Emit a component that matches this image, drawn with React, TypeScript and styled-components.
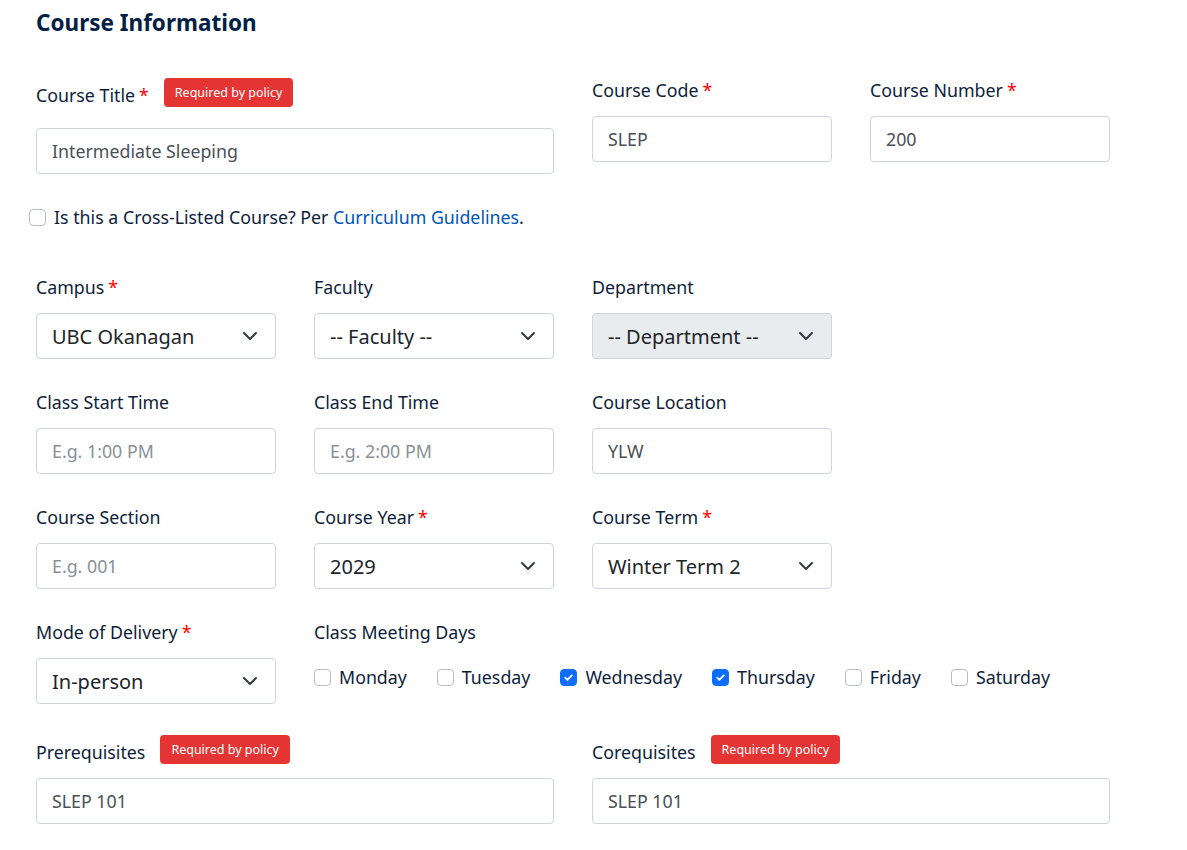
import React from 'react';
import styled, { createGlobalStyle } from 'styled-components';

const GlobalStyle = createGlobalStyle`
  body {
    margin: 0;
    background: #ffffff;
    font-family: "Noto Sans", "Open Sans", sans-serif;
  }
`;

const Page = styled.div`
  padding: 7px 36px 24px;
  width: 1074px;
`;

const Heading = styled.h2`
  margin: 0 0 39px;
  font-size: 22.5px;
  line-height: 32px;
  font-weight: 700;
  color: #002145;
`;

const Form = styled.div`
  display: flex;
  flex-direction: column;
  gap: 31px;
`;

const Row = styled.div`
  display: grid;
  grid-template-columns: repeat(4, 240px);
  column-gap: 38px;
  align-items: start;
`;

const Field = styled.div<{ $span?: number }>`
  grid-column: span ${({ $span }) => $span || 1};
  display: flex;
  flex-direction: column;
`;

const LabelRow = styled.div<{ $extra?: boolean }>`
  display: flex;
  align-items: flex-end;
  gap: 15px;
  margin-bottom: ${({ $extra }) => ($extra ? '21px' : '14px')};
`;

const Label = styled.label`
  font-size: 17.8px;
  line-height: 24px;
  color: #0e1e3a;
`;

const Star = styled.span`
  color: #ff0000;
  margin-left: 4px;
`;

const Badge = styled.span`
  display: inline-flex;
  align-items: center;
  height: 29px;
  padding: 0 11px;
  border-radius: 4px;
  background: #e43434;
  color: #ffffff;
  font-size: 12.5px;
`;

const Input = styled.input`
  box-sizing: border-box;
  width: 100%;
  height: 46px;
  padding: 0 15px;
  border: 1px solid #ced4da;
  border-radius: 4px;
  font-family: inherit;
  font-size: 17.8px;
  color: #495057;
  background: #ffffff;

  &::placeholder {
    color: #8a9097;
  }
`;

const SelectWrap = styled.div`
  position: relative;
  width: 100%;
`;

const Select = styled.select<{ $disabled?: boolean }>`
  box-sizing: border-box;
  width: 100%;
  height: 46px;
  padding: 0 40px 0 15px;
  border: 1px solid #ced4da;
  border-radius: 4px;
  font-family: inherit;
  font-size: 20px;
  color: #212529;
  background: ${({ $disabled }) => ($disabled ? '#e9ecef' : '#ffffff')};
  appearance: none;
  -webkit-appearance: none;
  opacity: 1;
`;

const Chevron = styled.svg`
  position: absolute;
  right: 18px;
  top: 50%;
  margin-top: -6px;
  width: 16px;
  height: 12px;
  pointer-events: none;
`;

const CheckLine = styled.div`
  display: flex;
  align-items: center;
  gap: 8px;
  margin: 0 0 15px -7px;
  font-size: 17.8px;
  line-height: 24px;
  color: #0e1e3a;
`;

const Link = styled.a`
  color: #0055b7;
  text-decoration: none;
`;

const Box = styled.span<{ $checked?: boolean }>`
  box-sizing: border-box;
  display: inline-flex;
  align-items: center;
  justify-content: center;
  width: 17px;
  height: 17px;
  border-radius: 4px;
  border: 1px solid ${({ $checked }) => ($checked ? '#0d6efd' : '#b8bcc1')};
  background: ${({ $checked }) => ($checked ? '#0d6efd' : '#ffffff')};
  flex-shrink: 0;
`;

const Days = styled.div`
  display: flex;
  align-items: center;
  gap: 30px;
  height: 46px;
  margin-top: -4px;
`;

const Day = styled.label`
  display: flex;
  align-items: center;
  gap: 8px;
  font-size: 17.8px;
  color: #0e1e3a;
`;

const ChevronIcon = () => (
  <Chevron viewBox="0 0 16 12">
    <path d="M2 3l6 6 6-6" fill="none" stroke="#343a40" strokeWidth="2" strokeLinecap="round" strokeLinejoin="round" />
  </Chevron>
);

const CheckBox: React.FC<{ checked?: boolean }> = ({ checked }) => (
  <Box $checked={checked}>
    {checked && (
      <svg width="11" height="11" viewBox="0 0 12 12">
        <path d="M2.5 6.2l2.3 2.3 4.8-4.8" fill="none" stroke="#ffffff" strokeWidth="2" strokeLinecap="round" strokeLinejoin="round" />
      </svg>
    )}
  </Box>
);

interface SelectFieldProps {
  label: string;
  value: string;
  required?: boolean;
  disabled?: boolean;
}

const SelectField: React.FC<SelectFieldProps> = ({ label, value, required, disabled }) => (
  <Field>
    <LabelRow>
      <Label>
        {label}
        {required && <Star>*</Star>}
      </Label>
    </LabelRow>
    <SelectWrap>
      <Select $disabled={disabled} defaultValue={value}>
        <option value={value}>{value}</option>
      </Select>
      <ChevronIcon />
    </SelectWrap>
  </Field>
);

interface InputFieldProps {
  label: string;
  value?: string;
  placeholder?: string;
  required?: boolean;
  badge?: boolean;
  span?: number;
  extra?: boolean;
}

const InputField: React.FC<InputFieldProps> = ({ label, value, placeholder, required, badge, span, extra }) => (
  <Field $span={span}>
    <LabelRow $extra={extra}>
      <Label>
        {label}
        {required && <Star>*</Star>}
      </Label>
      {badge && <Badge>Required by policy</Badge>}
    </LabelRow>
    <Input defaultValue={value} placeholder={placeholder} />
  </Field>
);

const days = [
  { name: 'Monday', checked: false },
  { name: 'Tuesday', checked: false },
  { name: 'Wednesday', checked: true },
  { name: 'Thursday', checked: true },
  { name: 'Friday', checked: false },
  { name: 'Saturday', checked: false },
];

const App: React.FC = () => {
  return (
    <Page>
      <GlobalStyle />
      <Heading>Course Information</Heading>
      <Form>
        <Row>
          <InputField label="Course Title" value="Intermediate Sleeping" required badge span={2} extra />
          <InputField label="Course Code" value="SLEP" required />
          <InputField label="Course Number" value="200" required />
        </Row>
        <CheckLine>
          <CheckBox />
          <span>
            Is this a Cross-Listed Course? Per <Link href="#">Curriculum Guidelines</Link>.
          </span>
        </CheckLine>
        <Row>
          <SelectField label="Campus" value="UBC Okanagan" required />
          <SelectField label="Faculty" value="-- Faculty --" />
          <SelectField label="Department" value="-- Department --" disabled />
        </Row>
        <Row>
          <InputField label="Class Start Time" placeholder="E.g. 1:00 PM" />
          <InputField label="Class End Time" placeholder="E.g. 2:00 PM" />
          <InputField label="Course Location" value="YLW" />
        </Row>
        <Row>
          <InputField label="Course Section" placeholder="E.g. 001" />
          <SelectField label="Course Year" value="2029" required />
          <SelectField label="Course Term" value="Winter Term 2" required />
        </Row>
        <Row>
          <SelectField label="Mode of Delivery" value="In-person" required />
          <Field $span={3}>
            <LabelRow>
              <Label>Class Meeting Days</Label>
            </LabelRow>
            <Days>
              {days.map(d => (
                <Day key={d.name}>
                  <CheckBox checked={d.checked} />
                  {d.name}
                </Day>
              ))}
            </Days>
          </Field>
        </Row>
        <Row>
          <InputField label="Prerequisites" value="SLEP 101" badge span={2} />
          <InputField label="Corequisites" value="SLEP 101" badge span={2} />
        </Row>
      </Form>
    </Page>
  );
};

export default App;
